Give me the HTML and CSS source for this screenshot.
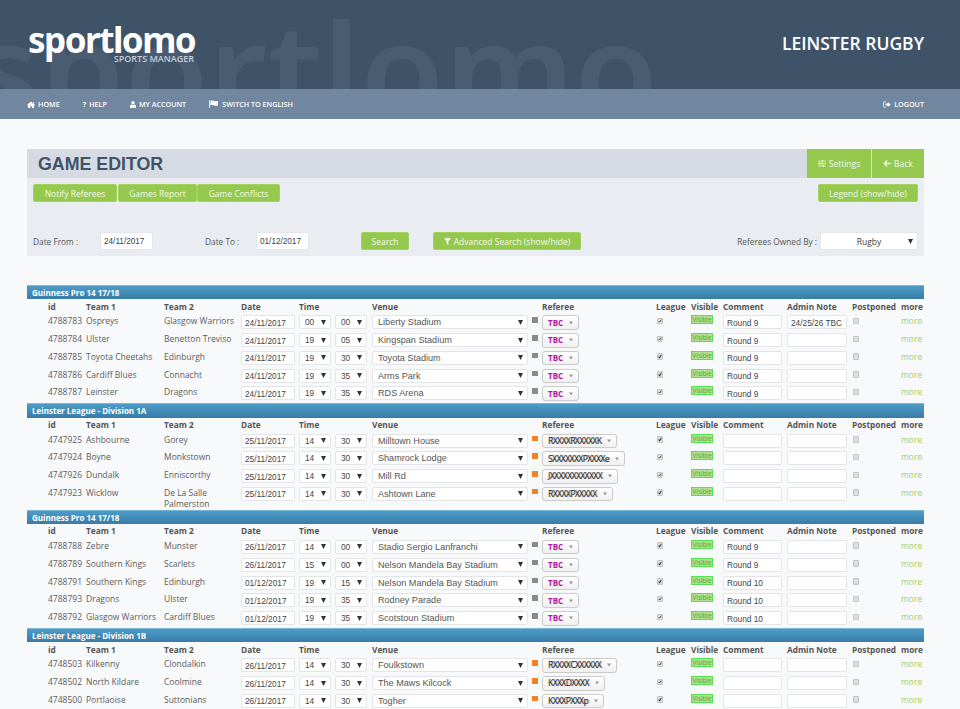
FILE: index.html
```html
<!DOCTYPE html>
<html lang="en">
<head>
<meta charset="utf-8">
<title>Game Editor</title>
<link rel="stylesheet" href="styles.css">
</head>
<body>
<svg class="defs" width="0" height="0" aria-hidden="true">
  <symbol id="i-home" viewBox="0 0 16 14"><path d="M8 1 0 8l1 1 1-.8V14h4.500V10h3v4H14V8.200l1 .8 1-1-2-1.800V2h-2v3.400z"/></symbol>
  <symbol id="i-user" viewBox="0 0 12 14"><circle cx="6" cy="3.500" r="3.300"/><path d="M0 14v-3.500C0 8.500 1.500 7 3 7c1 .7 2 1 3 1s2-.3 3-1c1.500 0 3 1.500 3 3.500V14z"/></symbol>
  <symbol id="i-flag" viewBox="0 0 16 14"><path d="M0 0h1.500v14H0zM2.500 1.500C5 .5 7 .5 9 1.500s4 1 7 0v8c-3 1-5 1-7 0s-4-1-6.500 0z"/></symbol>
  <symbol id="i-logout" viewBox="0 0 16 14"><path d="M6 1H2.500C1.200 1 .5 2 .5 3v8c0 1 .7 2 2 2H6v-1.500H2.500c-.4 0-.6-.2-.6-.5V3c0-.3.2-.5.6-.5H6zM9.500 2v3H5v4h4.500v3l6-5z"/></symbol>
  <symbol id="i-sliders" viewBox="0 0 14 12"><path d="M0 1h7V0h2v1h5v1.500H9v1H7v-1H0zM0 5.300h2v-1h2v1h10v1.500H4v1H2v-1H0zM0 9.500h8v-1h2v1h4V11h-4v1H8v-1H0z"/></symbol>
  <symbol id="i-back" viewBox="0 0 14 12"><path d="M6.500 0 8 1.500 5 4.500h9v3H5l3 3L6.500 12 .5 6z"/></symbol>
  <symbol id="i-filter" viewBox="0 0 12 12"><path d="M0 0h12L7.500 5.500V12l-3-2V5.500z"/></symbol>
  <symbol id="i-caret" viewBox="0 0 8 6"><path d="M0 0h8L4 6z"/></symbol>
</svg>

<header class="masthead">
  <div class="logo">
    <div class="logo-word">sportlomo</div>
    <div class="logo-sub">SPORTS MANAGER</div>
  </div>
  <div class="org">LEINSTER RUGBY</div>
</header>

<nav class="topnav">
  <a class="nav-item nav-home"><svg class="ico-home"><use href="#i-home"/></svg>HOME</a>
  <a class="nav-item nav-help"><span class="q">?</span>HELP</a>
  <a class="nav-item nav-account"><svg class="ico-user"><use href="#i-user"/></svg>MY ACCOUNT</a>
  <a class="nav-item"><svg class="ico-flag"><use href="#i-flag"/></svg>SWITCH TO ENGLISH</a>
  <a class="nav-item nav-logout"><svg class="ico-logout"><use href="#i-logout"/></svg>LOGOUT</a>
</nav>

<main class="page">
  <div class="titlebar">
    <h1>GAME EDITOR</h1>
    <a class="tab tab-settings"><svg class="ico-sliders"><use href="#i-sliders"/></svg>Settings</a>
    <a class="tab tab-back"><svg class="ico-back"><use href="#i-back"/></svg>Back</a>
  </div>
  <div class="toolbar">
    <div class="tool-row">
      <a class="btn btn-notify">Notify Referees</a>
      <a class="btn btn-report">Games Report</a>
      <a class="btn btn-conflicts">Game Conflicts</a>
      <a class="btn btn-legend">Legend (show/hide)</a>
    </div>
    <div class="search-row">
      <label class="lbl lbl-from">Date From :</label>
      <input class="field field-date" value="24/11/2017">
      <label class="lbl lbl-to">Date To :</label>
      <input class="field field-date" value="01/12/2017">
      <a class="btn btn-search">Search</a>
      <a class="btn btn-adv"><svg class="ico-filter"><use href="#i-filter"/></svg>Advanced Search (show/hide)</a>
      <label class="lbl lbl-owner">Referees Owned By :</label>
      <select class="owner"><option>Rugby</option></select>
    </div>
  </div>

  <section class="group first">
    <h2>Guinness Pro 14 17/18</h2>
    <div class="row head"><span>id</span><span>Team 1</span><span>Team 2</span><span>Date</span><span>Time</span><span></span><span>Venue</span><span></span><span>Referee</span><span>League</span><span>Visible</span><span>Comment</span><span>Admin Note</span><span>Postponed</span><span>more</span></div>
    <div class="row"><span>4788783</span><span>Ospreys</span><span>Glasgow Warriors</span><input class="inp d" value="24/11/2017"><select class="sel t"><option>00</option></select><select class="sel t"><option>00</option></select><select class="sel v"><option>Liberty Stadium</option></select><i class="sq"></i><a class="ref tbc">TBC<svg><use href="#i-caret"/></svg></a><input type="checkbox" class="cb" checked disabled><b class="vis">Visible</b><input class="inp c" value="Round 9"><input class="inp a" value="24/25/26 TBC"><input type="checkbox" class="cb" disabled><a class="more">more</a></div>
    <div class="row"><span>4788784</span><span>Ulster</span><span>Benetton Treviso</span><input class="inp d" value="24/11/2017"><select class="sel t"><option>19</option></select><select class="sel t"><option>05</option></select><select class="sel v"><option>Kingspan Stadium</option></select><i class="sq"></i><a class="ref tbc">TBC<svg><use href="#i-caret"/></svg></a><input type="checkbox" class="cb" checked disabled><b class="vis">Visible</b><input class="inp c" value="Round 9"><input class="inp a"><input type="checkbox" class="cb" disabled><a class="more">more</a></div>
    <div class="row"><span>4788785</span><span>Toyota Cheetahs</span><span>Edinburgh</span><input class="inp d" value="24/11/2017"><select class="sel t"><option>19</option></select><select class="sel t"><option>30</option></select><select class="sel v"><option>Toyota Stadium</option></select><i class="sq"></i><a class="ref tbc">TBC<svg><use href="#i-caret"/></svg></a><input type="checkbox" class="cb" checked disabled><b class="vis">Visible</b><input class="inp c" value="Round 9"><input class="inp a"><input type="checkbox" class="cb" disabled><a class="more">more</a></div>
    <div class="row"><span>4788786</span><span>Cardiff Blues</span><span>Connacht</span><input class="inp d" value="24/11/2017"><select class="sel t"><option>19</option></select><select class="sel t"><option>35</option></select><select class="sel v"><option>Arms Park</option></select><i class="sq"></i><a class="ref tbc">TBC<svg><use href="#i-caret"/></svg></a><input type="checkbox" class="cb" checked disabled><b class="vis">Visible</b><input class="inp c" value="Round 9"><input class="inp a"><input type="checkbox" class="cb" disabled><a class="more">more</a></div>
    <div class="row"><span>4788787</span><span>Leinster</span><span>Dragons</span><input class="inp d" value="24/11/2017"><select class="sel t"><option>19</option></select><select class="sel t"><option>35</option></select><select class="sel v"><option>RDS Arena</option></select><i class="sq"></i><a class="ref tbc">TBC<svg><use href="#i-caret"/></svg></a><input type="checkbox" class="cb" checked disabled><b class="vis">Visible</b><input class="inp c" value="Round 9"><input class="inp a"><input type="checkbox" class="cb" disabled><a class="more">more</a></div>
  </section>

  <section class="group">
    <h2>Leinster League - Division 1A</h2>
    <div class="row head"><span>id</span><span>Team 1</span><span>Team 2</span><span>Date</span><span>Time</span><span></span><span>Venue</span><span></span><span>Referee</span><span>League</span><span>Visible</span><span>Comment</span><span>Admin Note</span><span>Postponed</span><span>more</span></div>
    <div class="row"><span>4747925</span><span>Ashbourne</span><span>Gorey</span><input class="inp d" value="25/11/2017"><select class="sel t"><option>14</option></select><select class="sel t"><option>30</option></select><select class="sel v"><option>Milltown House</option></select><i class="sq on"></i><a class="ref">RXXXXRXXXXXK<svg><use href="#i-caret"/></svg></a><input type="checkbox" class="cb" checked disabled><b class="vis">Visible</b><input class="inp c"><input class="inp a"><input type="checkbox" class="cb" disabled><a class="more">more</a></div>
    <div class="row"><span>4747924</span><span>Boyne</span><span>Monkstown</span><input class="inp d" value="25/11/2017"><select class="sel t"><option>14</option></select><select class="sel t"><option>30</option></select><select class="sel v"><option>Shamrock Lodge</option></select><i class="sq on"></i><a class="ref">SXXXXXXXPXXXXe<svg><use href="#i-caret"/></svg></a><input type="checkbox" class="cb" checked disabled><b class="vis">Visible</b><input class="inp c"><input class="inp a"><input type="checkbox" class="cb" disabled><a class="more">more</a></div>
    <div class="row"><span>4747926</span><span>Dundalk</span><span>Enniscorthy</span><input class="inp d" value="25/11/2017"><select class="sel t"><option>14</option></select><select class="sel t"><option>30</option></select><select class="sel v"><option>Mill Rd</option></select><i class="sq on"></i><a class="ref">JXXXXXXXXXXXX<svg><use href="#i-caret"/></svg></a><input type="checkbox" class="cb" checked disabled><b class="vis">Visible</b><input class="inp c"><input class="inp a"><input type="checkbox" class="cb" disabled><a class="more">more</a></div>
    <div class="row tall"><span>4747923</span><span>Wicklow</span><span>De La Salle Palmerston</span><input class="inp d" value="25/11/2017"><select class="sel t"><option>14</option></select><select class="sel t"><option>30</option></select><select class="sel v"><option>Ashtown Lane</option></select><i class="sq on"></i><a class="ref">RXXXXPXXXXX<svg><use href="#i-caret"/></svg></a><input type="checkbox" class="cb" checked disabled><b class="vis">Visible</b><input class="inp c"><input class="inp a"><input type="checkbox" class="cb" disabled><a class="more">more</a></div>
  </section>

  <section class="group">
    <h2>Guinness Pro 14 17/18</h2>
    <div class="row head"><span>id</span><span>Team 1</span><span>Team 2</span><span>Date</span><span>Time</span><span></span><span>Venue</span><span></span><span>Referee</span><span>League</span><span>Visible</span><span>Comment</span><span>Admin Note</span><span>Postponed</span><span>more</span></div>
    <div class="row"><span>4788788</span><span>Zebre</span><span>Munster</span><input class="inp d" value="26/11/2017"><select class="sel t"><option>14</option></select><select class="sel t"><option>00</option></select><select class="sel v"><option>Stadio Sergio Lanfranchi</option></select><i class="sq"></i><a class="ref tbc">TBC<svg><use href="#i-caret"/></svg></a><input type="checkbox" class="cb" checked disabled><b class="vis">Visible</b><input class="inp c" value="Round 9"><input class="inp a"><input type="checkbox" class="cb" disabled><a class="more">more</a></div>
    <div class="row"><span>4788789</span><span>Southern Kings</span><span>Scarlets</span><input class="inp d" value="26/11/2017"><select class="sel t"><option>15</option></select><select class="sel t"><option>00</option></select><select class="sel v"><option>Nelson Mandela Bay Stadium</option></select><i class="sq"></i><a class="ref tbc">TBC<svg><use href="#i-caret"/></svg></a><input type="checkbox" class="cb" checked disabled><b class="vis">Visible</b><input class="inp c" value="Round 9"><input class="inp a"><input type="checkbox" class="cb" disabled><a class="more">more</a></div>
    <div class="row"><span>4788791</span><span>Southern Kings</span><span>Edinburgh</span><input class="inp d" value="01/12/2017"><select class="sel t"><option>19</option></select><select class="sel t"><option>15</option></select><select class="sel v"><option>Nelson Mandela Bay Stadium</option></select><i class="sq"></i><a class="ref tbc">TBC<svg><use href="#i-caret"/></svg></a><input type="checkbox" class="cb" checked disabled><b class="vis">Visible</b><input class="inp c" value="Round 10"><input class="inp a"><input type="checkbox" class="cb" disabled><a class="more">more</a></div>
    <div class="row"><span>4788793</span><span>Dragons</span><span>Ulster</span><input class="inp d" value="01/12/2017"><select class="sel t"><option>19</option></select><select class="sel t"><option>35</option></select><select class="sel v"><option>Rodney Parade</option></select><i class="sq"></i><a class="ref tbc">TBC<svg><use href="#i-caret"/></svg></a><input type="checkbox" class="cb" checked disabled><b class="vis">Visible</b><input class="inp c" value="Round 10"><input class="inp a"><input type="checkbox" class="cb" disabled><a class="more">more</a></div>
    <div class="row"><span>4788792</span><span>Glasgow Warriors</span><span>Cardiff Blues</span><input class="inp d" value="01/12/2017"><select class="sel t"><option>19</option></select><select class="sel t"><option>35</option></select><select class="sel v"><option>Scotstoun Stadium</option></select><i class="sq"></i><a class="ref tbc">TBC<svg><use href="#i-caret"/></svg></a><input type="checkbox" class="cb" checked disabled><b class="vis">Visible</b><input class="inp c" value="Round 10"><input class="inp a"><input type="checkbox" class="cb" disabled><a class="more">more</a></div>
  </section>

  <section class="group">
    <h2>Leinster League - Division 1B</h2>
    <div class="row head"><span>id</span><span>Team 1</span><span>Team 2</span><span>Date</span><span>Time</span><span></span><span>Venue</span><span></span><span>Referee</span><span>League</span><span>Visible</span><span>Comment</span><span>Admin Note</span><span>Postponed</span><span>more</span></div>
    <div class="row"><span>4748503</span><span>Kilkenny</span><span>Clondalkin</span><input class="inp d" value="26/11/2017"><select class="sel t"><option>14</option></select><select class="sel t"><option>30</option></select><select class="sel v"><option>Foulkstown</option></select><i class="sq on"></i><a class="ref">RXXXXCXXXXXX<svg><use href="#i-caret"/></svg></a><input type="checkbox" class="cb" checked disabled><b class="vis">Visible</b><input class="inp c"><input class="inp a"><input type="checkbox" class="cb" disabled><a class="more">more</a></div>
    <div class="row"><span>4748502</span><span>North Kildare</span><span>Coolmine</span><input class="inp d" value="26/11/2017"><select class="sel t"><option>14</option></select><select class="sel t"><option>30</option></select><select class="sel v"><option>The Maws Kilcock</option></select><i class="sq on"></i><a class="ref">KXXXDXXXX<svg><use href="#i-caret"/></svg></a><input type="checkbox" class="cb" checked disabled><b class="vis">Visible</b><input class="inp c"><input class="inp a"><input type="checkbox" class="cb" disabled><a class="more">more</a></div>
    <div class="row"><span>4748500</span><span>Portlaoise</span><span>Suttonians</span><input class="inp d" value="26/11/2017"><select class="sel t"><option>14</option></select><select class="sel t"><option>30</option></select><select class="sel v"><option>Togher</option></select><i class="sq on"></i><a class="ref">KXXXPXXXp<svg><use href="#i-caret"/></svg></a><input type="checkbox" class="cb" checked disabled><b class="vis">Visible</b><input class="inp c"><input class="inp a"><input type="checkbox" class="cb" disabled><a class="more">more</a></div>
  </section>
</main>
</body>
</html>
```
FILE: styles.css
```css
* { box-sizing: border-box; }
html, body { margin: 0; height: 709px; overflow: hidden; }
body { background: #f8f9fb; font-family: "Open Sans", sans-serif; color: #555; }
.defs { position: absolute; }

/* masthead */
.masthead {
  height: 89px;
  background: #3f5368 url("data:image/svg+xml,%3Csvg xmlns='http://www.w3.org/2000/svg' width='960' height='89'%3E%3Ctext x='-27' y='118' textLength='685' lengthAdjust='spacingAndGlyphs' font-family='Noto Sans' font-weight='600' font-size='130' fill='%234a5c72'%3Esportlomo%3C/text%3E%3C/svg%3E") no-repeat left top;
  display: flex; justify-content: space-between; padding: 0 36px 0 28px;
}
.logo { width: 166px; padding-top: 25px; }
.logo-word { font: 700 35px/30px "Noto Sans", sans-serif; color: #fff; letter-spacing: -1.5px; white-space: nowrap; }
.logo-sub { font: 600 9px/10px "Open Sans", sans-serif; color: #c6cdd6; text-align: right; margin-top: -1px; }
.org { font: 600 17.500px/22px "Open Sans", sans-serif; color: #fff; padding-top: 32px; }

/* nav */
.topnav {
  height: 30px; background: #71869f; display: flex; align-items: center; gap: 23px; padding: 0 36px 0 27px;
}
.nav-item { display: flex; align-items: center; font: 600 7.200px/10px "Open Sans", sans-serif; color: #fff; }
.nav-item svg { fill: #fff; margin-right: 3px; }
.ico-home { width: 8px; height: 7px; }
.ico-user { width: 6px; height: 7px; }
.ico-flag { width: 9px; height: 8px; margin-right: 4px !important; }
.ico-logout { width: 8px; height: 7px; }
.q { font-weight: 700; margin-right: 3px; }
.nav-logout { margin-left: auto; }

/* title */
.page { padding: 30px 36px 0 27px; }
.titlebar { display: flex; height: 29px; background: #d6dbe3; align-items: stretch; }
.titlebar h1 { margin: 0 auto 0 11px; font: 700 17.800px/31px "Liberation Sans", sans-serif; color: #3f5368; }
.tab {
  display: flex; align-items: center; justify-content: center; background: #94c94e; color: #f2f8e8;
  font: 8.500px/10px "Open Sans", sans-serif;
}
.tab svg { fill: #f2f8e8; margin-right: 3px; }
.tab-settings { width: 64px; }
.tab-back { width: 52px; margin-left: 1px; }
.ico-sliders { width: 8px; height: 7px; }
.ico-back { width: 8px; height: 7px; }

/* toolbar */
.toolbar { height: 78px; background: #e9ecf1; padding: 6px 6px 0; }
.tool-row { display: flex; height: 18px; }
.btn {
  display: flex; align-items: center; justify-content: center; background: #94c94e; color: #f2f8e8;
  border: 1px solid #a4d160; border-radius: 2px; padding-top: 1px; font: 8.500px/10px "Open Sans", sans-serif;
}
.btn-notify { width: 84px; margin-right: 1px; }
.btn-report { width: 79px; }
.btn-conflicts { width: 83px; }
.btn-legend { width: 100px; margin-left: auto; }
.search-row { display: flex; align-items: center; height: 18px; margin-top: 30px; }
.lbl { padding-top: 1px; font: 8.300px/10px "Open Sans", sans-serif; color: #555; }
.lbl-from { width: 67px; }
.lbl-to { width: 51px; margin-left: 52px; }
.field {
  height: 18px; border: 1px solid #e4e6ea; border-radius: 2px; background: #fff; padding: 1px 3px 0;
  font: 8.200px "Liberation Sans", sans-serif; color: #444; outline: 0; width: 53px;
}
.btn-search { width: 48px; height: 18px; margin-left: 52px; }
.btn-adv { width: 148px; height: 18px; margin-left: 24px; }
.ico-filter { width: 7px; height: 7px; fill: #f2f8e8; margin-right: 3px; }
.lbl-owner { margin-left: auto; margin-right: 3px; }
.owner {
  appearance: none; width: 98px; height: 18px; border: 1px solid #e4e6ea; border-radius: 2px;
  background: #fff url("data:image/svg+xml,%3Csvg xmlns='http://www.w3.org/2000/svg' width='5' height='5'%3E%3Cpath d='M0 0h5L2.500 5z' fill='%23333'/%3E%3C/svg%3E") no-repeat right 4px center;
  font: 8.500px "Open Sans", sans-serif; color: #444; text-align: center; padding: 1px 0 0;
}

/* groups */
.group h2 {
  margin: 0; height: 14.300px; background: linear-gradient(#4c9cc8, #397ca6); border-top: 1px solid #7bb6d6;
  font: 700 8px/13px "Open Sans", sans-serif; color: #fff; padding-left: 5px;
}
.first { margin-top: 29px; }
.row {
  display: grid; height: 17.800px; padding-left: 21px; align-items: start;
  grid-template-columns: 38px 78px 77px 58px 36px 37px 160px 10px 114px 35px 32px 64px 65px 49px 23px;
  font: 8.500px/11px "Open Sans", sans-serif; color: #5c5c5c;
}
.row > span { padding-top: 1px; }
.row.tall { height: 23.700px; }
.row.head { height: 15px; font-size: 8.300px; font-weight: 700; color: #555; }
.row.head > span { padding-top: 1.500px; }

.inp, .sel {
  height: 14px; margin-top: 1px; border: 1px solid #e3e5e9; border-radius: 2px; background-color: #fff;
  font: 8.300px/12px "Liberation Sans", sans-serif; color: #444; outline: 0;
}
.inp { padding: 1px 2px 0 3px; }
.inp.d { width: 54px; }
.inp.c { width: 59px; }
.inp.a { width: 60px; }
.sel {
  appearance: none; padding: 0 0 0 5px;
  background: #fff url("data:image/svg+xml,%3Csvg xmlns='http://www.w3.org/2000/svg' width='5' height='5'%3E%3Cpath d='M0 0h5L2.500 5z' fill='%23333'/%3E%3C/svg%3E") no-repeat right 4px center;
}
.sel.t { width: 32px; }
.sel.v { width: 156px; color: #555; font-size: 9.100px; }
.sq { width: 6px; height: 5.500px; margin-top: 3px; background: #8a8a8a; }
.sq.on { background: #f58220; }
.ref {
  display: inline-flex; align-items: center; justify-self: start; height: 14.500px; margin-top: 1px;
  padding: 0 5px; border: 1px solid #ccc; border-radius: 3px; background: linear-gradient(#fff, #f0f0f0);
  font: 400 8.500px/12px "Open Sans", sans-serif; color: #222; letter-spacing: -0.55px; box-shadow: 0 0 1px #ddd;
  text-shadow: 1px 0 1px rgba(0, 0, 0, .35);
}
.ref svg { width: 4px; height: 4px; margin-left: 6px; fill: #999; }
.ref.tbc { color: #b5179e; font: 700 8px/12px "Open Sans", sans-serif; letter-spacing: 0; text-shadow: none; }
.cb {
  appearance: none; width: 6.500px; height: 6.500px; margin: 3.500px 0 0 0.500px; border: 1px solid #c4c4c4; border-radius: 1px;
  background: #dedede;
}
.cb:checked {
  background: #dcdcdc url("data:image/svg+xml,%3Csvg xmlns='http://www.w3.org/2000/svg' viewBox='0 0 6 6'%3E%3Cpath d='M1 3l1.500 1.500L5 1' fill='none' stroke='%23333' stroke-width='1.300'/%3E%3C/svg%3E") center / 100% no-repeat;
}
.vis {
  justify-self: start; width: 22px; height: 9px; margin-top: 1px; border: 1px solid #55e055; background: #b3e090;
  font: 400 6.300px/7px "Open Sans", sans-serif; color: #45a83a; text-align: center;
}
.more { padding-top: 1px; color: #a3cf6a; font-size: 8.500px; }
```
